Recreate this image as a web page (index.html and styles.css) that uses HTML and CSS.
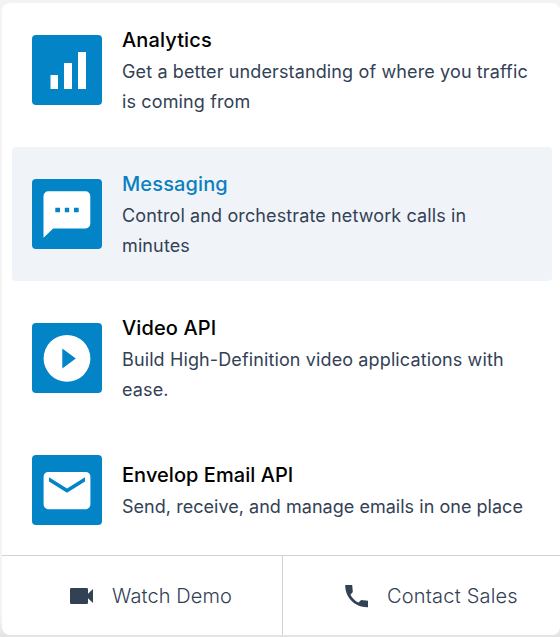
FILE: index.html
```html
<!DOCTYPE html>
<html lang="en">
<head>
<meta charset="utf-8">
<title>Products</title>
<link rel="stylesheet" href="styles.css">
</head>
<body>
<div class="panel">
  <nav class="list">
    <a class="item analytics">
      <span class="tile"><svg viewBox="0 0 70 70"><path d="M18.500 40h7.500v14h-7.500zM32 28h8v26h-8zM46 17h8v37h-8z"/></svg></span>
      <span class="copy"><span class="title">Analytics</span><span class="desc">Get a better understanding of where you traffic is coming from</span></span>
    </a>
    <a class="item active">
      <span class="tile"><svg viewBox="0 0 70 70"><path fill-rule="evenodd" d="M16.200 12.300h37.400a4.700 4.700 0 0 1 4.700 4.700v27.700a4.700 4.700 0 0 1-4.700 4.700H21.200l-9.700 9.300V17a4.700 4.700 0 0 1 4.700-4.700zM23.300 28.700v4.500h4.700v-4.500zm9.500 0v4.500h4.400v-4.500zm9.200 0v4.500h4.700v-4.500z"/></svg></span>
      <span class="copy"><span class="title">Messaging</span><span class="desc">Control and orchestrate network calls in minutes</span></span>
    </a>
    <a class="item video">
      <span class="tile"><svg viewBox="0 0 70 70"><path fill-rule="evenodd" d="M35 12a23.400 23.400 0 1 0 0 46.800a23.400 23.400 0 1 0 0-46.800zM30.300 25.500l13.500 10-13.500 10z"/></svg></span>
      <span class="copy"><span class="title">Video API</span><span class="desc">Build High-Definition video applications with ease.</span></span>
    </a>
    <a class="item email">
      <span class="tile"><svg viewBox="0 0 70 70"><path fill-rule="evenodd" d="M16.200 17h37.600a4.600 4.600 0 0 1 4.600 4.600v28a4.600 4.600 0 0 1-4.600 4.600H16.200a4.600 4.600 0 0 1-4.600-4.600v-28a4.600 4.600 0 0 1 4.600-4.600zM17 22.300v4.200l18 11.200 18-11.200v-4.200L35 33.500z"/></svg></span>
      <span class="copy"><span class="title">Envelop Email API</span><span class="desc">Send, receive, and manage emails in one place</span></span>
    </a>
  </nav>
  <div class="actions">
    <a class="action"><svg viewBox="0 0 30 30"><path d="M4.300 7h15.400a1.300 1.300 0 0 1 1.300 1.300v4.400l5-4.700v14l-5-4.700v4.400a1.300 1.300 0 0 1-1.300 1.300H4.300A1.300 1.300 0 0 1 3 21.700V8.300A1.300 1.300 0 0 1 4.300 7z"/></svg><span>Watch Demo</span></a>
    <a class="action"><svg viewBox="0 0 30 30"><path d="M3.200 4h7l.6 7-2.300 2.700c1.700 3.500 4.500 6.200 8 7.800l2.700-2.500 6.800.8v6.400C13.500 26.800 3 17 3.200 4z"/></svg><span>Contact Sales</span></a>
  </div>
</div>
</body>
</html>
```
FILE: styles.css
```css
* { box-sizing: border-box; }
body { margin: 0; background: linear-gradient(#f3f3f3 0, #f3f3f3 620px, #e4e4e5 635px); height: 637px; font-family: Inter, sans-serif; overflow: hidden; display: flow-root; }
.panel { height: 632px; margin: 3px 0 2px 2px; background: #fff; border-radius: 8px; display: flex; flex-direction: column; overflow: hidden; }
.list { height: 552px; padding: 0 8px 0 10px; flex: none; }
.item { display: flex; align-items: center; height: 134px; padding: 0 20px; gap: 20px; border-radius: 4px; margin-bottom: 10px; }
.item.active { background: #f0f4f9; }
.item.email { height: 110px; }
.tile { width: 70px; height: 70px; flex: none; background: #0284c7; border-radius: 4px; }
.tile svg { display: block; width: 70px; height: 70px; fill: #fff; }
.copy { flex: 1; white-space: nowrap; }
.title, .desc { display: block; }
.title { font-size: 20px; line-height: 30px; font-weight: 500; color: #000; letter-spacing: .12px; }
.email .title { letter-spacing: .05px; }
.active .title { color: #0c7fc0; }
.desc { font-size: 18px; line-height: 30px; margin: 2px 0 -2px; color: #334155; white-space: normal; letter-spacing: .12px; }
.analytics .desc { letter-spacing: .13px; }
.email .desc { letter-spacing: .03px; }
.actions { height: 80px; display: grid; grid-template-columns: 281px 1fr; border-top: 1px solid #d1d1d6; }
.action { display: flex; align-items: center; justify-content: flex-start; gap: 15px; padding-left: 65px; font-size: 20px; font-weight: 300; color: #334155; letter-spacing: .1px; }
.action:first-child { border-right: 1px solid #d1d1d6; }
.action + .action { padding-left: 59px; letter-spacing: .2px; }
.action svg { width: 30px; height: 30px; fill: #334155; }
```
